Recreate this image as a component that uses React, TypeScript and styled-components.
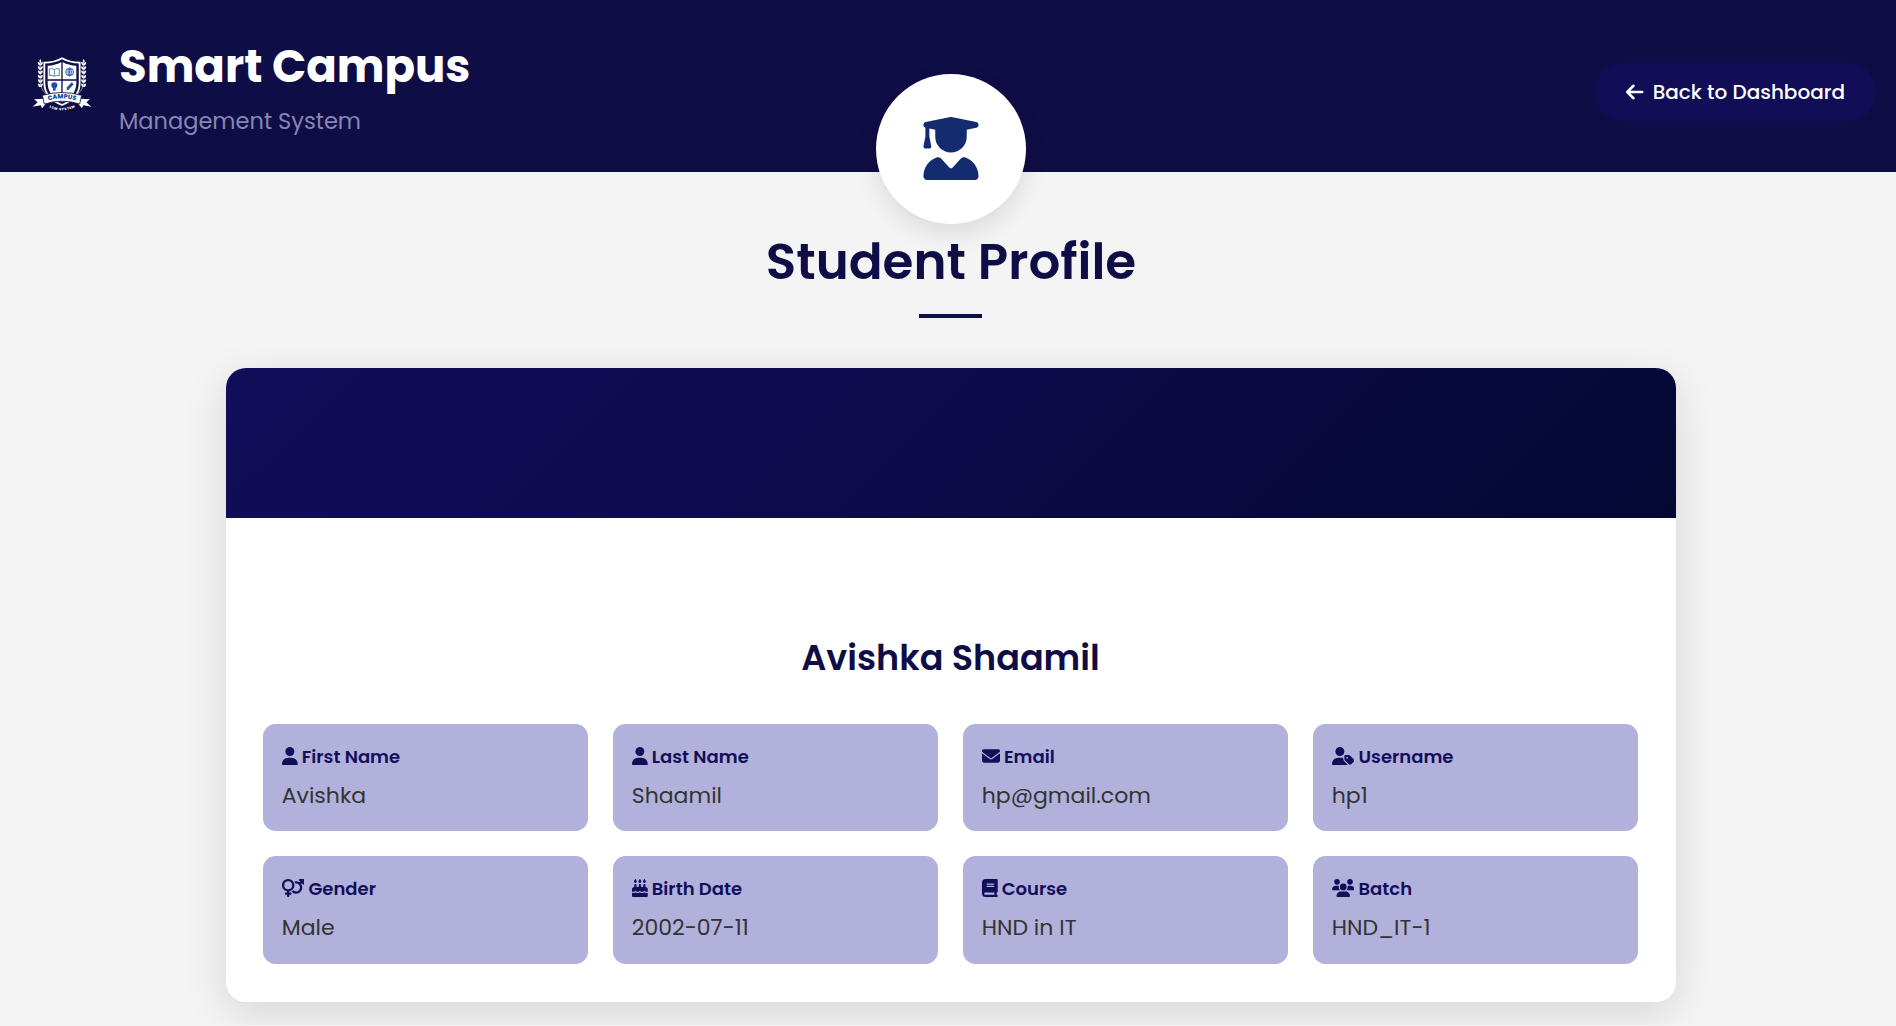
import React from 'react';
import styled, { createGlobalStyle } from 'styled-components';
import type { IconType } from 'react-icons';
import {
  FaArrowLeft,
  FaBook,
  FaCakeCandles,
  FaEnvelope,
  FaUser,
  FaUserGraduate,
  FaUserTag,
  FaUsers,
  FaVenusMars,
} from 'react-icons/fa6';

const GlobalStyle = createGlobalStyle`
  * {
    box-sizing: border-box;
    margin: 0;
    padding: 0;
  }

  body {
    background: #f4f4f4;
    color: #333;
    font-family: Poppins, Inter, 'Open Sans', sans-serif;
    line-height: 1.6;
  }
`;

const Header = styled.header`
  display: flex;
  align-items: center;
  justify-content: space-between;
  height: 172px;
  padding: 0 20px 0 32px;
  background: #0f0d45;
`;

const Brand = styled.div`
  display: flex;
  align-items: center;
  gap: 27px;
`;

const Crest = styled.svg`
  display: block;
  width: 60px;
  height: 55px;
  margin-top: -4px;
`;

const BrandText = styled.div`
  margin-top: -3px;
`;

const BrandTitle = styled.h1`
  color: #fff;
  font-size: 45px;
  font-weight: 700;
  line-height: 72px;
`;

const BrandSubtitle = styled.p`
  color: #8886b2;
  font-size: 22.5px;
  line-height: 36px;
`;

const BackLink = styled.a`
  display: flex;
  align-items: center;
  gap: 9px;
  height: 60px;
  margin-top: 12px;
  padding: 0 31px;
  border-radius: 30px;
  background: #110e57;
  color: #fff;
  font-size: 20px;
  font-weight: 500;
  text-decoration: none;

  svg {
    width: 17.5px;
    height: 20px;
  }
`;

const Main = styled.main`
  display: flex;
  flex-direction: column;
  align-items: center;
  padding: 0 0 23px 6px;
`;

const Avatar = styled.div`
  position: relative;
  display: flex;
  align-items: center;
  justify-content: center;
  width: 150px;
  height: 150px;
  margin-top: -98px;
  padding-bottom: 1px;
  border-radius: 50%;
  background: #fff;
  box-shadow: 0 10px 25px rgba(0, 0, 0, 0.1);
  color: #142b6f;

  svg {
    width: 56px;
    height: 63px;
  }
`;

const PageTitle = styled.h2`
  position: relative;
  margin-top: -2.5px;
  color: #0f0d45;
  font-size: 50px;
  font-weight: 600;
  line-height: 80px;
`;

const Underline = styled.div`
  width: 63px;
  height: 4px;
  margin: 12.5px 1px 50px 0;
  background: #0f0d45;
`;

const Card = styled.section`
  width: 1450px;
  overflow: hidden;
  border-radius: 20px;
  background: #fff;
  box-shadow: 0 12px 44px rgba(0, 0, 0, 0.12);
`;

const Banner = styled.div`
  height: 150px;
  background: linear-gradient(135deg, #110e5a, #0c0b49 52%, #030833);
`;

const CardBody = styled.div`
  padding: 112px 38px 38px 37px;
`;

const StudentName = styled.h3`
  margin-bottom: 38px;
  color: #0f0d45;
  font-size: 35px;
  font-weight: 600;
  line-height: 56px;
  text-align: center;
`;

const InfoGrid = styled.div`
  display: grid;
  grid-template-columns: repeat(4, 1fr);
  gap: 25px;
`;

const InfoItem = styled.div`
  padding: 18.75px 18.75px 18.4px;
  border-radius: 12.5px;
  background: #b2b1db;
`;

const InfoLabel = styled.div<{ $iconWidth: number }>`
  margin-bottom: 6.25px;
  color: #110e5a;
  font-size: 18px;
  font-weight: 600;
  line-height: 28.8px;

  svg {
    width: ${(p) => p.$iconWidth}em;
    height: 1em;
    vertical-align: -0.125em;
  }
`;

const InfoValue = styled.div`
  font-size: 22px;
  line-height: 35.2px;
`;

// iconWidth is the glyph's width in em, as the icons share a height of 1em.
const fields: { icon: IconType; iconWidth: number; label: string; value: string }[] = [
  { icon: FaUser, iconWidth: 0.875, label: 'First Name', value: 'Avishka' },
  { icon: FaUser, iconWidth: 0.875, label: 'Last Name', value: 'Shaamil' },
  { icon: FaEnvelope, iconWidth: 1, label: 'Email', value: 'hp@gmail.com' },
  { icon: FaUserTag, iconWidth: 1.25, label: 'Username', value: 'hp1' },
  { icon: FaVenusMars, iconWidth: 1.25, label: 'Gender', value: 'Male' },
  { icon: FaCakeCandles, iconWidth: 0.875, label: 'Birth Date', value: '2002-07-11' },
  { icon: FaBook, iconWidth: 0.875, label: 'Course', value: 'HND in IT' },
  { icon: FaUsers, iconWidth: 1.25, label: 'Batch', value: 'HND_IT-1' },
];

const leafRows = [14, 27, 40, 53, 66, 79];

// One laurel branch; the other side of the crest mirrors it.
function Laurel() {
  return (
    <g fill="#fff">
      <path d="M25 12V76Q27 98 42 110" fill="none" stroke="#fff" strokeWidth="1.6" />
      <ellipse cx="25" cy="12" rx="2.6" ry="5" />
      {leafRows.map((y) => (
        <g key={y}>
          <ellipse cx="21.5" cy={y + 6} rx="3" ry="5.8" transform={`rotate(-32 21.5 ${y + 6})`} />
          <ellipse cx="28.5" cy={y + 6} rx="3" ry="5.8" transform={`rotate(32 28.5 ${y + 6})`} />
        </g>
      ))}
    </g>
  );
}

function CampusCrest() {
  return (
    <Crest viewBox="0 0 180 165" aria-hidden="true">
      <Laurel />
      <g transform="translate(180 0) scale(-1 1)">
        <Laurel />
      </g>
      <path
        d="M90 4Q112 17 143 17V78Q143 122 90 144Q37 122 37 78V17Q68 17 90 4Z"
        fill="#0f0d45"
        stroke="#fff"
        strokeWidth="5.5"
      />
      <path d="M90 14Q110 25 133 26V78Q133 116 90 135Q47 116 47 78V26Q70 25 90 14Z" fill="#fff" />
      <path d="M90 12V112M46 69H134" stroke="#0f0d45" strokeWidth="4" />
      <g fill="none" stroke="#2458b4" strokeWidth="2.2">
        <path d="M67 38Q59 32 52 36V56Q60 53 67 58Q74 53 82 56V36Q75 32 67 38ZM67 38V57" />
        <circle cx="113" cy="45" r="12" />
        <ellipse cx="113" cy="45" rx="5" ry="12" />
        <path d="M101 45H125M103 38H123M103 52H123M113 33V57" />
      </g>
      <g fill="#1c4ea9">
        <circle cx="67" cy="85" r="9" />
        <path d="M63 92H71V101H63Z" />
        <path d="M104 101L105 91L119 76L125 82L111 97Z" />
      </g>
      <path
        d="M33 125L6 127L17 136L2 149L26 145L30 154L44 137ZM147 125L174 127L163 136L178 149L154 145L150 154L136 137Z"
        fill="#fff"
      />
      <path
        d="M31 115Q90 98 149 115L143 141Q90 124 37 141Z"
        fill="#fff"
        stroke="#0f0d45"
        strokeWidth="2.5"
      />
      <path id="crest-ribbon" d="M47 131Q90 118 133 131" fill="none" />
      <path id="crest-motto" d="M50 150Q90 170 130 150" fill="none" />
      <text fill="#174ea8" fontFamily="Poppins, sans-serif" fontSize="19" fontWeight="800">
        <textPath href="#crest-ribbon" startOffset="50%" textAnchor="middle" textLength="84">
          CAMPUS
        </textPath>
      </text>
      <text fill="#fff" fontFamily="Poppins, sans-serif" fontSize="10" fontWeight="800">
        <textPath href="#crest-motto" startOffset="50%" textAnchor="middle" textLength="80">
          LCM SYSTEM
        </textPath>
      </text>
    </Crest>
  );
}

export default function App() {
  return (
    <>
      <GlobalStyle />
      <Header>
        <Brand>
          <CampusCrest />
          <BrandText>
            <BrandTitle>Smart Campus</BrandTitle>
            <BrandSubtitle>Management System</BrandSubtitle>
          </BrandText>
        </Brand>
        <BackLink href="#">
          <FaArrowLeft />
          <span>Back to Dashboard</span>
        </BackLink>
      </Header>
      <Main>
        <Avatar>
          <FaUserGraduate />
        </Avatar>
        <PageTitle>Student Profile</PageTitle>
        <Underline />
        <Card>
          <Banner />
          <CardBody>
            <StudentName>Avishka Shaamil</StudentName>
            <InfoGrid>
              {fields.map(({ icon: Icon, iconWidth, label, value }) => (
                <InfoItem key={label}>
                  <InfoLabel $iconWidth={iconWidth}>
                    <Icon /> {label}
                  </InfoLabel>
                  <InfoValue>{value}</InfoValue>
                </InfoItem>
              ))}
            </InfoGrid>
          </CardBody>
        </Card>
      </Main>
    </>
  );
}
